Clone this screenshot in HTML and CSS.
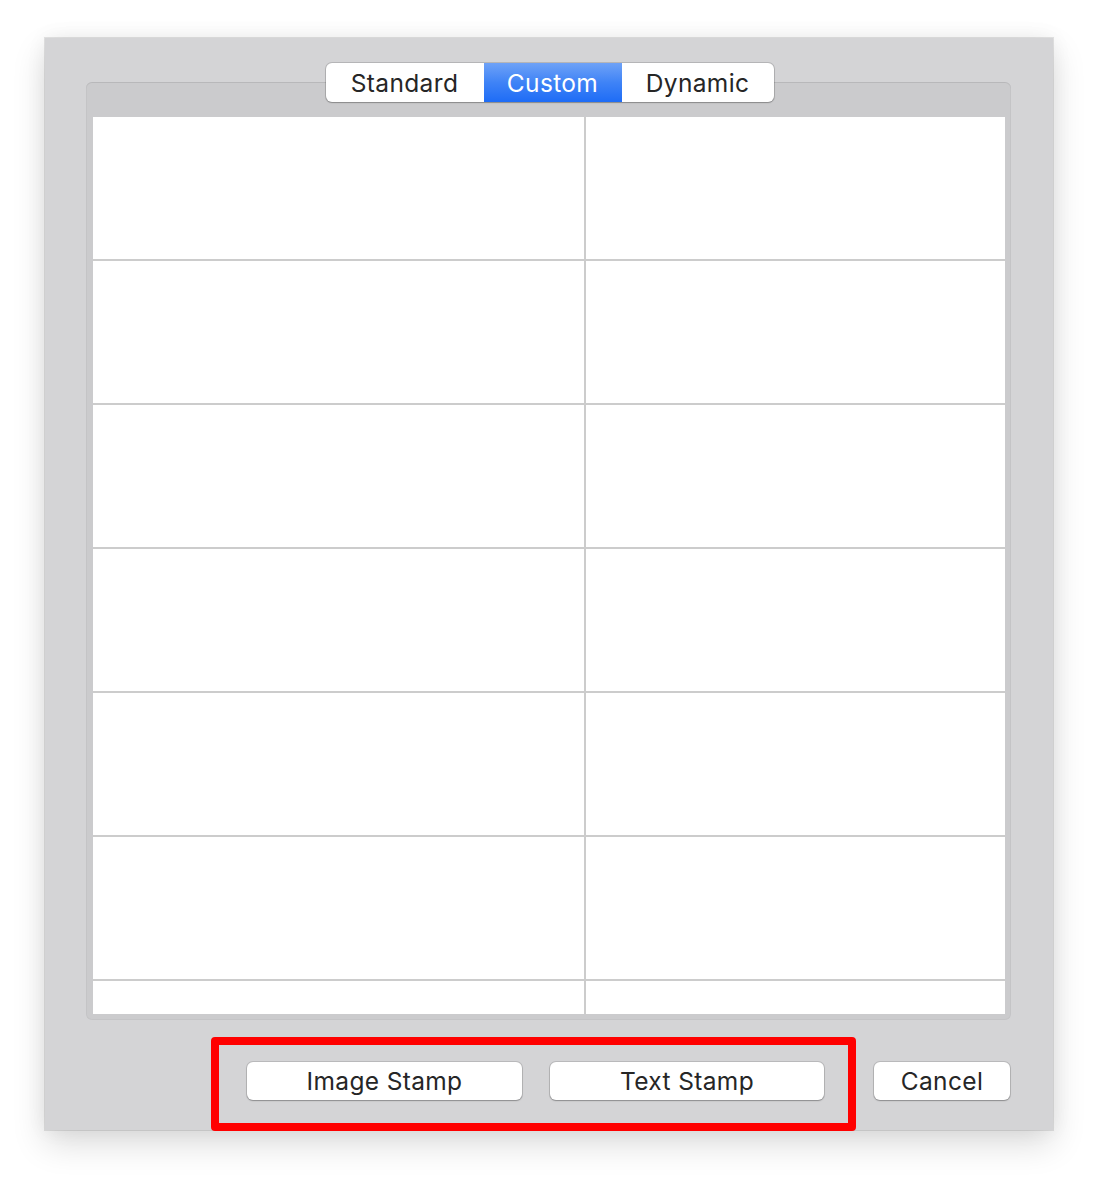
FILE: index.html
```html
<!DOCTYPE html>
<html>
<head>
<meta charset="utf-8">
<link rel="stylesheet" href="styles.css">
</head>
<body>
<div class="window">
  <div class="segmented">
    <div class="seg seg-standard">Standard</div>
    <div class="seg seg-custom active">Custom</div>
    <div class="seg seg-dynamic">Dynamic</div>
  </div>
  <div class="tabbox">
    <div class="table">
      <div class="cell left"></div><div class="cell"></div>
      <div class="cell left"></div><div class="cell"></div>
      <div class="cell left"></div><div class="cell"></div>
      <div class="cell left"></div><div class="cell"></div>
      <div class="cell left"></div><div class="cell"></div>
      <div class="cell left"></div><div class="cell"></div>
      <div class="cell left"></div><div class="cell"></div>
    </div>
  </div>
  <div class="actions">
    <button class="btn btn-image">Image Stamp</button>
    <button class="btn btn-text">Text Stamp</button>
    <button class="btn btn-cancel">Cancel</button>
    <div class="highlight"></div>
  </div>
</div>
</body>
</html>
```

FILE: styles.css
```css
html, body {
  margin: 0;
  padding: 0;
  background: #ffffff;
}
body {
  padding: 38px 0 0 45px;
  min-height: 1184px;
  box-sizing: border-box;
  font-family: Inter, "Liberation Sans", Arial, sans-serif;
}
.window {
  position: relative;
  width: 1008px;
  height: 1092px;
  box-sizing: border-box;
  background: #d4d4d6;
  box-shadow: 0 0 0 1px rgba(0,0,0,0.10), 0 14px 32px rgba(0,0,0,0.14), 0 0 20px rgba(0,0,0,0.06);
  padding-top: 25px;
  display: flex;
  flex-direction: column;
  align-items: center;
}
.segmented {
  position: relative;
  z-index: 2;
  display: flex;
  height: 39px;
  box-sizing: border-box;
  background: #ffffff;
  border-radius: 6px;
  box-shadow: 0 0 0 1px rgba(0,0,0,0.14), 0 1px 1.5px rgba(0,0,0,0.22);
  overflow: hidden;
  margin-bottom: -20px;
  margin-left: 1px;
}
.seg {
  display: flex;
  align-items: center;
  justify-content: center;
  font-size: 24.5px;
  color: #262626;
  letter-spacing: 0.35px;
}
.seg-standard { width: 158px; }
.seg-custom { width: 138px; }
.seg-dynamic { width: 152px; }
.seg.active {
  color: #ffffff;
  background: linear-gradient(to bottom, #6ea2f7 0%, #3f83f6 50%, #1e6cf6 100%);
}
.tabbox {
  width: 925px;
  height: 938px;
  box-sizing: border-box;
  margin-left: -1px;
  background: #cbcbcd;
  border-radius: 6px;
  box-shadow: inset 0 1px 0 rgba(0,0,0,0.06), inset 0 0 0 1px rgba(0,0,0,0.03);
  padding: 35px 6px 6px 7px;
}
.table {
  height: 897px;
  background: #ffffff;
  display: grid;
  grid-template-columns: 493px 1fr;
  grid-auto-rows: 144px;
  overflow: hidden;
}
.cell {
  border-bottom: 2px solid #cccccc;
  box-sizing: border-box;
}
.cell.left {
  border-right: 2px solid #cccccc;
}
.actions {
  position: relative;
  align-self: stretch;
  display: flex;
  justify-content: flex-end;
  padding: 42px 43px 0 0;
  gap: 28px;
}
.btn {
  height: 38px;
  box-sizing: border-box;
  background: #ffffff;
  border: none;
  border-radius: 6px;
  box-shadow: 0 0 0 1px rgba(0,0,0,0.12), 0 1px 1.5px rgba(0,0,0,0.25);
  font-family: Inter, "Liberation Sans", Arial, sans-serif;
  font-size: 24.5px;
  letter-spacing: 0.35px;
  color: #262626;
  padding: 0;
}
.btn-image { width: 275px; }
.btn-text { width: 274px; }
.btn-cancel { width: 136px; margin-left: 22px; }
.highlight {
  position: absolute;
  left: 166px;
  top: 17px;
  width: 645px;
  height: 94px;
  box-sizing: border-box;
  border: 8px solid #ff0000;
  border-radius: 4px;
}
```
